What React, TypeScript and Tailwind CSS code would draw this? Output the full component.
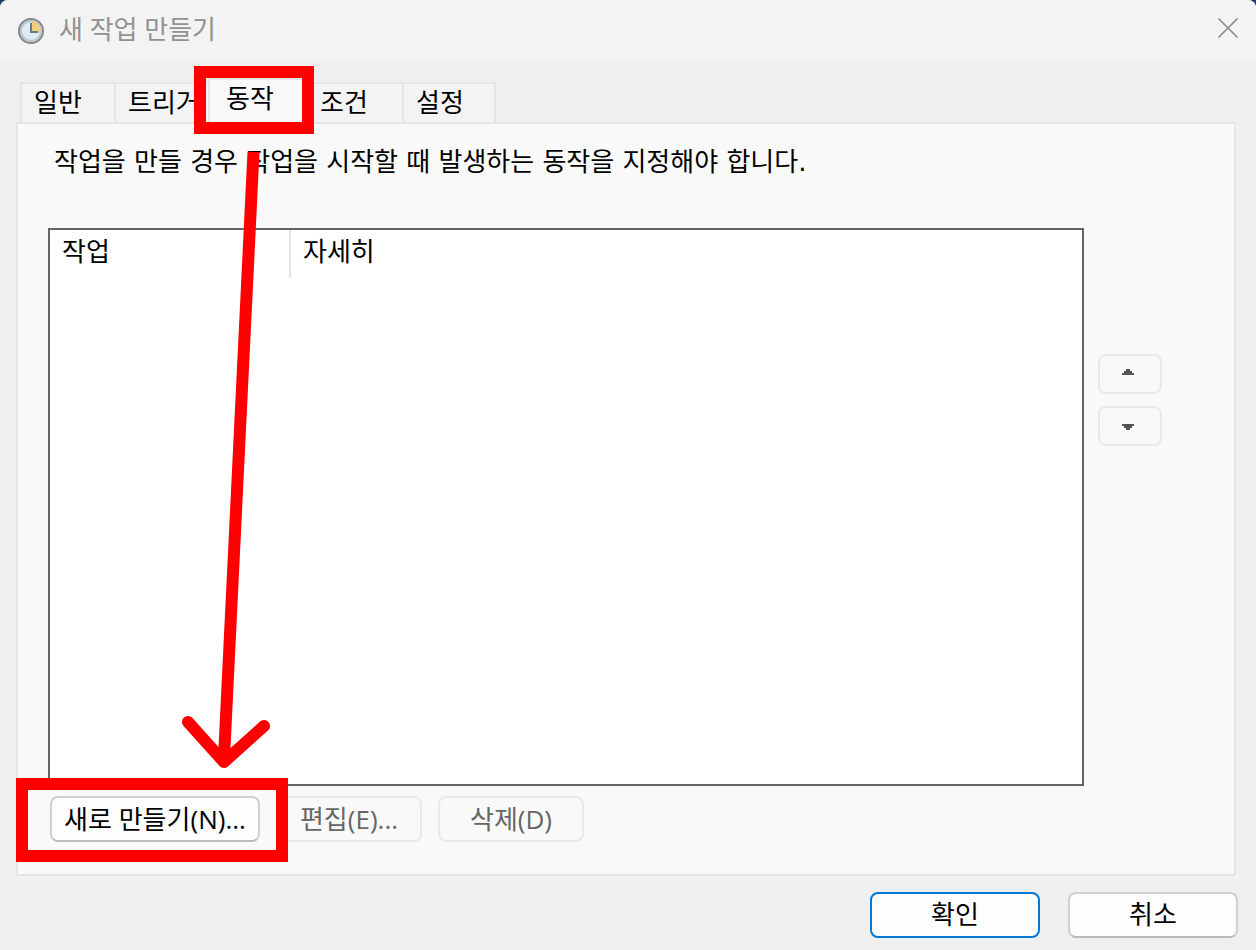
import { useState } from "react";
import { clsx } from "clsx";

type Tab = {
  id: string;
  label: string;
  width: string;
};

const tabs: Tab[] = [
  { id: "general", label: "일반", width: "w-24" },
  { id: "triggers", label: "트리거", width: "w-24" },
  { id: "actions", label: "동작", width: "w-[100px]" },
  { id: "conditions", label: "조건", width: "w-[98px]" },
  { id: "settings", label: "설정", width: "w-[94px]" },
];

const disabledButton =
  "h-[46px] w-[146px] rounded-lg border-2 border-[#e9e9e9] bg-[#f9f9f9] text-[#666666]";

function ClockIcon() {
  return (
    <svg aria-hidden="true" className="size-7 shrink-0" viewBox="0 0 28 28">
      <circle cx="14" cy="14" r="12" fill="#dfeaf1" stroke="#858585" strokeWidth="2" />
      <circle cx="14" cy="14" r="10" fill="none" stroke="#b4c9d6" strokeWidth="2" />
      <path d="M14 14V4a10 10 0 0 1 10 10 10 10 0 0 1-1 2z" fill="#f2cd7d" />
      <path d="M14 6v9h7" fill="none" stroke="#5d7d92" strokeWidth="2" />
    </svg>
  );
}

function TitleBar() {
  return (
    <header className="flex h-15 shrink-0 items-center justify-between bg-[#f3f3f3] pr-4 pl-[17px]">
      <div className="flex items-center gap-3.5 pt-0.5">
        <ClockIcon />
        <h1 className="pb-1 font-['Open_Sans','Noto_Sans_CJK_KR',sans-serif] text-[26px] leading-8 text-[#929292]">
          새 작업 만들기
        </h1>
      </div>
      <button type="button" aria-label="닫기" className="mb-1 p-0.5">
        <svg className="size-5" viewBox="0 0 20 20" stroke="#919191" strokeWidth="1.6">
          <path d="M0.5 0.5l19 19M19.5 0.5l-19 19" />
        </svg>
      </button>
    </header>
  );
}

type MoveButtonProps = {
  label: string;
  points: string;
  className: string;
};

function MoveButton({ label, points, className }: MoveButtonProps) {
  return (
    <button
      type="button"
      aria-label={label}
      disabled
      className={clsx(
        "flex h-10 w-16 items-center justify-center rounded-lg border-2 border-[#e9e9e9] pr-1",
        className,
      )}
    >
      <svg className="h-1.5 w-3" viewBox="0 0 12 6" fill="#555555">
        <polygon points={points} />
      </svg>
    </button>
  );
}

function ActionsPanel() {
  return (
    <section
      role="tabpanel"
      aria-labelledby="tab-actions"
      className="mr-5 ml-4 flex flex-1 flex-col border-2 border-[#e5e5e5] bg-[#f9f9f9] pr-18 pb-8 pl-[30px] shadow-[3px_3px_0_#f3f3f3]"
    >
      <p className="mt-5 pl-1.5 text-[26px] leading-9">
        작업을 만들 경우 작업을 시작할 때 발생하는 동작을 지정해야 합니다.
      </p>

      <div className="mt-12 flex flex-1 gap-3.5">
        <div className="flex-1 border-2 border-[#646464] bg-white">
          <table className="w-full table-fixed text-left text-[26px] leading-8">
            <thead>
              <tr className="h-12">
                <th scope="col" className="w-60 border-r-2 border-[#e5e5e5] pb-1 pl-3 font-normal">
                  작업
                </th>
                <th scope="col" className="pb-1 pl-3 font-normal">
                  자세히
                </th>
              </tr>
            </thead>
            <tbody />
          </table>
        </div>
        <div className="flex flex-col gap-3 pt-[126px]">
          <MoveButton
            label="위로 이동"
            points="0,6 0,4 2,4 2,2 4,2 4,0 8,0 8,2 10,2 10,4 12,4 12,6"
            className="pb-1"
          />
          <MoveButton
            label="아래로 이동"
            points="0,0 0,2 2,2 2,4 4,4 4,6 8,6 8,4 10,4 10,2 12,2 12,0"
            className="pt-0.5"
          />
        </div>
      </div>

      <div className="mt-2.5 flex gap-4 pl-0.5 font-['Open_Sans','Noto_Sans_CJK_KR',sans-serif] text-[26px] leading-9">
        <button
          type="button"
          className="h-[46px] w-[210px] rounded-lg border-2 border-[#d0d0d0] border-b-[#bbbbbb] bg-[#fdfdfd]"
        >
          새로 만들기(N)...
        </button>
        <button type="button" disabled className={disabledButton}>
          편집(E)...
        </button>
        <button type="button" disabled className={disabledButton}>
          삭제(D)
        </button>
      </div>
    </section>
  );
}

// Red boxes and arrow that lead from the tab to the "new" button
function Annotation() {
  return (
    <svg
      aria-hidden="true"
      className="pointer-events-none absolute top-0 left-0 h-[900px] w-80"
      viewBox="0 0 320 900"
      fill="none"
      stroke="#ff0000"
      strokeWidth="12"
    >
      <rect x="200" y="72" width="108" height="56" />
      <rect x="22" y="784" width="260" height="72" />
      <path d="M253.500 152L224 758" />
      <path d="M188 722L224 762L264 726" strokeLinecap="round" strokeLinejoin="round" />
    </svg>
  );
}

export default function App() {
  const [selected, setSelected] = useState("actions");

  return (
    <div className="bg-[#1d3a6b]">
      <main className="relative flex min-h-screen flex-col overflow-hidden rounded-t-lg bg-[#efefef] font-['DejaVu_Sans','Noto_Sans_CJK_KR',sans-serif] text-black">
        <TitleBar />

        <div role="tablist" className="mt-[18px] flex h-11 shrink-0 items-end pl-5">
          {tabs.map((tab) => (
            <button
              key={tab.id}
              id={`tab-${tab.id}`}
              type="button"
              role="tab"
              aria-selected={selected === tab.id}
              onClick={() => setSelected(tab.id)}
              className={clsx(
                "-mr-0.5 border-2 border-b-0 border-[#e5e5e5] text-left text-[26px] leading-9",
                tab.width,
                selected === tab.id
                  ? "h-11 bg-[#f9f9f9] pb-1 pl-4"
                  : "h-10 bg-[#f3f3f3] pl-3",
              )}
            >
              {tab.label}
            </button>
          ))}
        </div>

        <ActionsPanel />

        <footer className="flex shrink-0 justify-end gap-7 pt-4 pr-[18px] pb-3 text-[26px] leading-9">
          <button
            type="button"
            className="h-[46px] w-[170px] rounded-lg border-2 border-[#0078d4] bg-[#fdfdfd]"
          >
            확인
          </button>
          <button
            type="button"
            className="h-[46px] w-[170px] rounded-lg border-2 border-[#d0d0d0] border-b-[#bbbbbb] bg-[#fdfdfd]"
          >
            취소
          </button>
        </footer>

        <Annotation />
      </main>
    </div>
  );
}
